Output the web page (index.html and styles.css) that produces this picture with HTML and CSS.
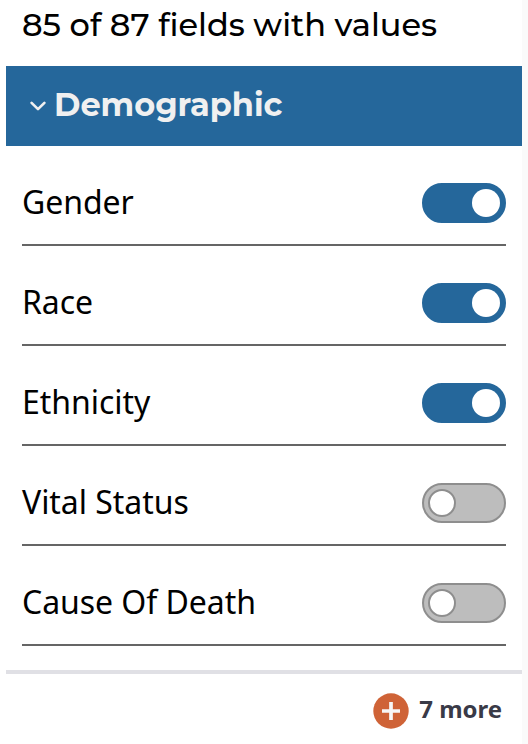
FILE: index.html
```html
<!DOCTYPE html>
<html lang="en">
<head>
<meta charset="utf-8">
<title>Fields</title>
<link rel="stylesheet" href="styles.css">
</head>
<body>
<main class="panel">
  <p class="summary">85 of 87 fields with values</p>
  <section class="card">
    <h2 class="card-header">
      <svg class="chevron" viewBox="0 0 16 12"><path d="M1.600 2.800 8 9.200l6.400-6.400"/></svg>
      <span class="card-title">Demographic</span>
    </h2>
    <div class="fields">
      <div class="field"><span class="name">Gender</span><span class="toggle on"></span></div>
      <div class="field"><span class="name">Race</span><span class="toggle on"></span></div>
      <div class="field"><span class="name">Ethnicity</span><span class="toggle on"></span></div>
      <div class="field"><span class="name">Vital Status</span><span class="toggle"></span></div>
      <div class="field"><span class="name">Cause Of Death</span><span class="toggle"></span></div>
    </div>
    <div class="more">
      <svg class="plus" viewBox="0 0 36 36"><circle cx="18" cy="18" r="17.700"/><path d="M18 9v18M9 18h18"/></svg>
      <span class="more-text">7 more</span>
    </div>
  </section>
</main>
</body>
</html>
```
FILE: styles.css
```css
*, *::before { box-sizing: border-box; }
body { margin: 0; background: #fafafa; color: #000; font-family: "Noto Sans", sans-serif; overflow: hidden; }
.panel { width: 522px; height: 744px; padding-left: 6px; background: #fff; }
.summary { margin: 0; height: 66px; padding: 5px 16px; font: 500 32px/40px Montserrat, Inter, sans-serif; white-space: nowrap; }
.card-header { margin: 0; height: 80px; padding: 0 0 2px 24px; display: flex; align-items: center; gap: 8px; background: #25679b; color: #f0f0f0; font: 700 32px/40px Montserrat, Inter, sans-serif; }
.card-title { letter-spacing: -0.03px; }
.chevron { width: 16px; height: 12px; margin-top: 2px; fill: none; stroke: #f0f0f0; stroke-width: 2.600; stroke-linecap: round; stroke-linejoin: round; }
.fields { padding: 0 16px; height: 528px; border-bottom: 4px solid #e0e0e5; }
.field { height: 100px; padding-top: 16px; display: flex; align-items: center; justify-content: space-between; border-bottom: 2px solid #656565; font-size: 32px; line-height: 44px; letter-spacing: -0.05px; }
.name { margin-bottom: 2px; }
.toggle { width: 84px; height: 40px; padding: 4px; border: 2px solid #8e8e8e; border-radius: 20px; background: #bdbdbd; display: flex; align-items: center; }
.toggle::before { content: ""; width: 28px; height: 28px; border: 2px solid #8e8e8e; border-radius: 50%; background: #fff; }
.toggle.on { background: #25679b; border-color: #25679b; justify-content: flex-end; }
.toggle.on::before { border: 0; }
.more { height: 74px; padding-right: 20px; display: flex; align-items: center; justify-content: flex-end; gap: 10px; font-size: 24px; line-height: 32px; font-weight: 700; color: #393a47; }
.more-text { margin-bottom: 5px; letter-spacing: -0.05px; }
.plus { width: 36px; height: 36px; fill: #cf6337; }
.plus path { stroke: #f7f7f7; stroke-width: 3.700; }
```
